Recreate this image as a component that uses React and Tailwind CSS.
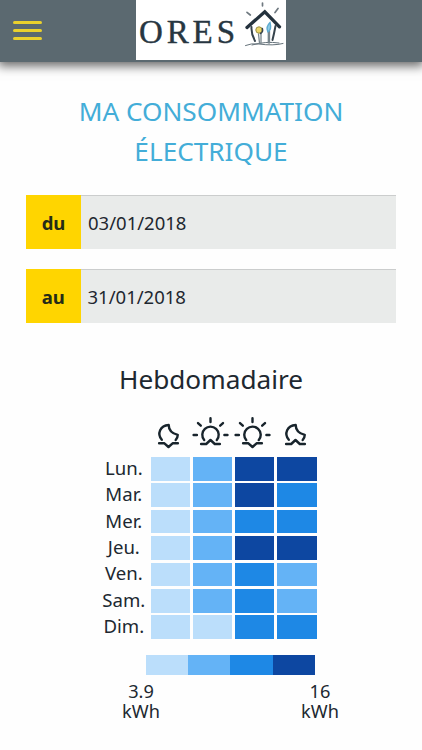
const LEVELS = ['bg-[#bbdefb]', 'bg-[#64b3f6]', 'bg-[#1e88e5]', 'bg-[#0d47a1]'];

const DAYS = [
  ['Lun.', [0, 1, 3, 3]],
  ['Mar.', [0, 1, 3, 2]],
  ['Mer.', [0, 1, 2, 2]],
  ['Jeu.', [0, 1, 3, 3]],
  ['Ven.', [0, 1, 2, 1]],
  ['Sam.', [0, 1, 2, 1]],
  ['Dim.', [0, 0, 2, 2]],
];

function Logo() {
  return (
    <svg className="block h-[60px] w-[150px] bg-white" viewBox="0 0 150 60" fill="none" strokeLinecap="round">
      <text x="3" y="43.2" fontSize="33" textLength="96" fill="#273641" stroke="#273641" strokeWidth="0.4" fontFamily="'Liberation Serif', serif">ORES</text>
      <path d="M111 27.5L128.8 11.8L143.5 26.8" stroke="#24323d" strokeWidth="3.3" />
      <path d="M115.5 27Q115 34 119 41M139.5 26Q138 34 136.5 40" stroke="#36434d" strokeWidth="2" />
      <path d="M111 12.3L114.3 15M126.5 3V5.8M139 12.5L142 8.5" stroke="#6f7980" strokeWidth="1.7" />
      <path d="M109.5 45.5Q115 43 123 44Q137 46 147 43.5M116 45Q130 41 143 43" stroke="#65727a" strokeWidth="1" />
      <path d="M125 33V43M122.5 34L123.5 43M132.3 32V43M133.5 31V43" stroke="#78858c" strokeWidth="1.3" />
      <circle cx="123" cy="30" r="3.2" fill="#ead568" stroke="#9a9045" strokeWidth="1" />
      <path d="M126.4 28.5Q127.5 32 124.5 33.5" stroke="#374550" strokeWidth="1.4" />
      <path d="M134 22.5Q129.5 27 131.8 31.8Q136 30 134 22.5Z" fill="#8fcbe5" stroke="#5eabd0" strokeWidth="1.4" />
    </svg>
  );
}

function PeriodIcon({ sun, down }) {
  return (
    <svg className="h-[36px] w-[39.4px]" viewBox="0 0 39.4 36" fill="none" stroke="#18242c" strokeWidth="2.4" strokeLinecap="round" strokeLinejoin="round">
      {sun ? (
        <>
          <path d="M13.2 24.1A8.2 8.2 0 1 1 25.8 24.1" />
          <path d="M19.5 2.2V6M7 7.1L9.8 9.7M32 7.1L29.2 9.7M2.6 19H5.9M33.4 19H36.5" />
        </>
      ) : (
        <path d="M12.8 23.8C7.7 17.8 11.2 9.4 19.7 9Q19.8 16.8 28.8 18.8Q28.8 21.5 26.7 24" />
      )}
      <path d={down ? 'M10.1 27.3H15.4L19.5 31L23.6 27.3H28.9' : 'M10.1 28H15.2L19.5 24L23.8 28H28.9'} />
    </svg>
  );
}

function DateField({ label, value, labelWidth, height }) {
  return (
    <div className={`flex w-[369.5px] text-[18.5px] ${height}`}>
      <div className={`flex items-center justify-center bg-[#ffd500] pt-px font-bold text-[#252b17] ${labelWidth}`}>{label}</div>
      <div className="flex flex-1 items-center border-t border-[#cbcdcd] bg-[#e9ebea] pl-[7px] text-[#1e2730]">{value}</div>
    </div>
  );
}

export default function App() {
  return (
    <div className="h-[750px] w-[422px] overflow-hidden bg-[#fefefe] font-['Noto_Sans',sans-serif] text-[#202830]">
      <header className="flex h-[62px] bg-[#5b6970] shadow-[0_2px_10px_2px_rgba(0,0,0,0.6)]">
        <button aria-label="Menu" className="ml-[13px] mt-[21px] flex h-[20px] w-[29px] flex-col gap-[5px]">
          <span className="h-[3px] w-full rounded-full bg-[#ead02d]" />
          <span className="h-[3px] w-full rounded-full bg-[#ead02d]" />
          <span className="h-[3px] w-full rounded-full bg-[#ead02d]" />
        </button>
        <div className="ml-[93.5px]"><Logo /></div>
      </header>

      <main className="flex flex-col">
        <h1 className="mt-[29px] text-center text-[26.2px] leading-[40px] text-[#43add8]">
          MA CONSOMMATION<br />ÉLECTRIQUE
        </h1>
        <div className="ml-[26px] mt-[24px] flex flex-col gap-[20px]">
          <DateField label="du" value="03/01/2018" labelWidth="w-[55px]" height="h-[54px]" />
          <DateField label="au" value="31/01/2018" labelWidth="w-[54.5px]" height="h-[54px]" />
        </div>
        <h2 className="mt-[36px] text-center text-[26.2px] leading-[40px]">Hebdomadaire</h2>

        <section className="flex flex-col">
          <div className="ml-[149px] mt-[17px] flex h-[41px] gap-[2.8px]">
            <PeriodIcon down />
            <PeriodIcon sun />
            <PeriodIcon sun down />
            <PeriodIcon />
          </div>
          <div className="ml-[97px] flex flex-col gap-[2.7px]">
            {DAYS.map(([day, values]) => (
              <div key={day} className="flex h-[23.7px] items-center">
                <span className="w-[53.7px] pb-[2px] text-center text-[18.6px] leading-[24px]">{day}</span>
                <div className="flex h-full gap-[2.8px]">
                  {values.map((value, index) => (
                    <span key={index} className={`w-[39.4px] ${LEVELS[value]}`} />
                  ))}
                </div>
              </div>
            ))}
          </div>
          <div className="ml-[146px] mt-[16.5px] flex h-[20px]">
            {LEVELS.map((level) => <span key={level} className={`w-[42.2px] ${level}`} />)}
          </div>
          <div className="ml-[111px] mt-[5.5px] flex w-[239px] justify-between text-center text-[18.2px] leading-[20px]">
            <span className="w-[60px]">3.9<br />kWh</span>
            <span className="w-[60px]">16<br />kWh</span>
          </div>
        </section>
      </main>
    </div>
  );
}
